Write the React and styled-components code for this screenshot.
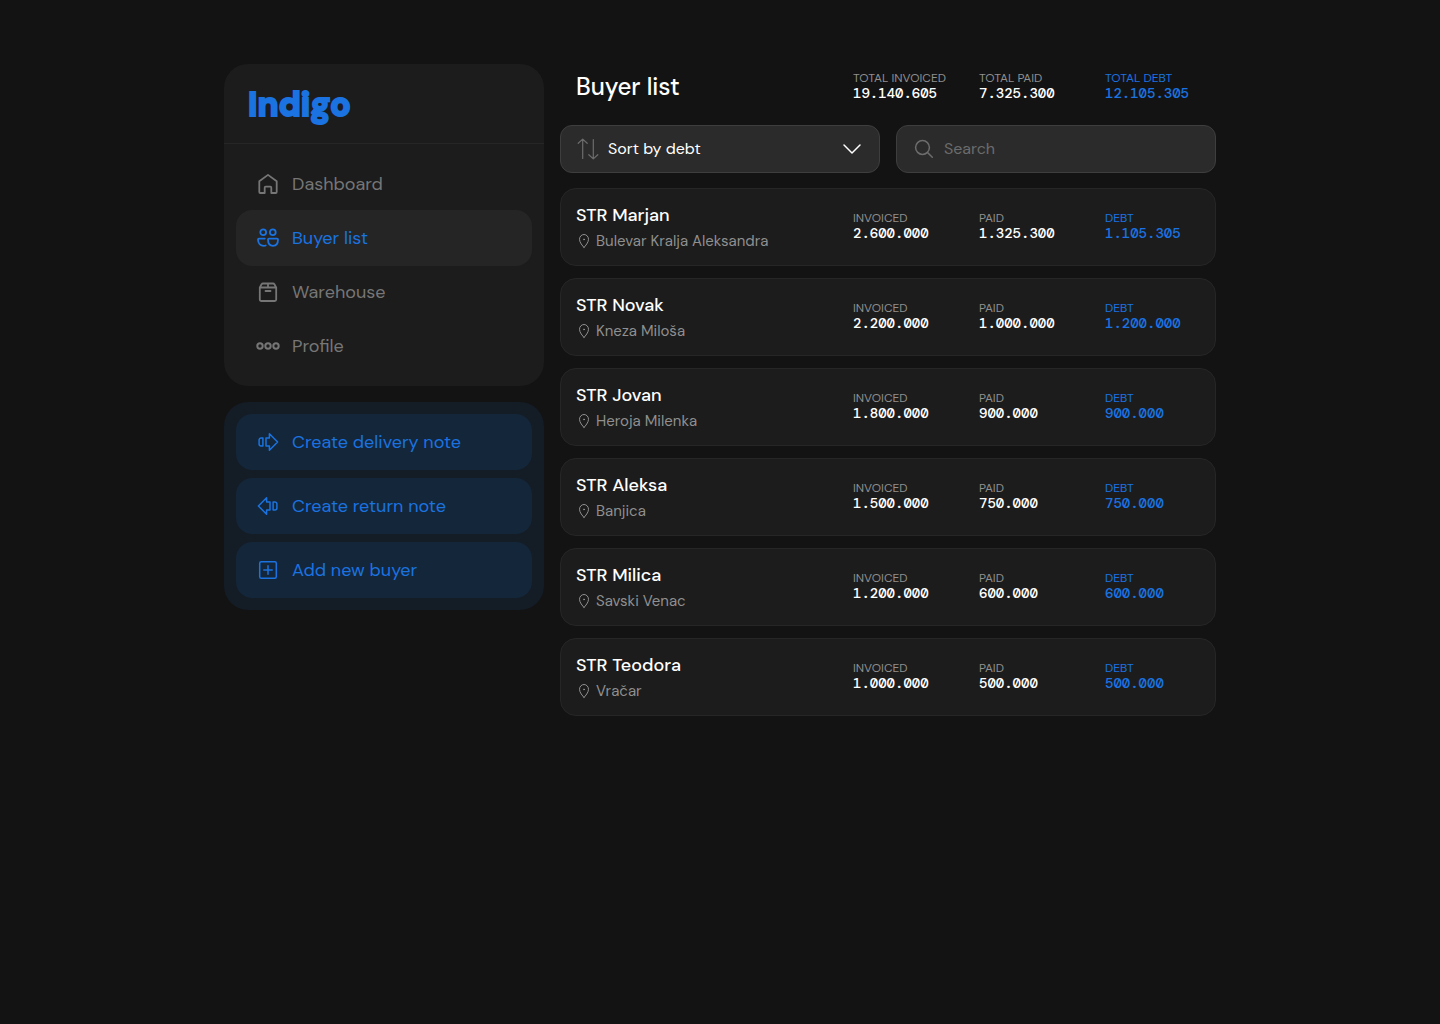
import React, { useState } from "react";
import styled, { createGlobalStyle } from "styled-components";

const GlobalStyle = createGlobalStyle`
    *, *::before, *::after {
        box-sizing: border-box;
    }

    body {
        margin: 0;
        background-color: #131313;
        color: white;
        font-family: "DM Sans", Inter, "Liberation Sans", sans-serif;
    }

    button, input, select {
        font-family: inherit;
    }
`;

const Page = styled.div`
    display: grid;
    grid-template-columns: minmax(240px, 320px) minmax(0, 1fr);
    align-items: start;
    gap: 16px;
    max-width: 1024px;
    margin: 0 auto;
    padding: 64px 16px;
`;

const Sidebar = styled.aside`
    display: flex;
    flex-direction: column;
    gap: 16px;
`;

const Panel = styled.div`
    border-radius: 24px;
    background-color: #1c1c1c;
`;

const Logo = styled.div`
    display: flex;
    align-items: center;
    height: 80px;
    padding: 2px 24px 0;
    border-bottom: 1px solid #262626;
    color: #1a73e0;
    font-size: 34px;
    font-weight: 800;
    -webkit-text-stroke: 2px #1a73e0;
`;

const Nav = styled.nav`
    display: flex;
    flex-direction: column;
    padding: 12px;
`;

const NavLink = styled.a`
    display: flex;
    align-items: center;
    gap: 12px;
    height: 56px;
    padding: 0 20px;
    border-radius: 16px;
    background-color: ${({ $active }) => ($active ? "#252525" : "transparent")};
    color: ${({ $active }) => ($active ? "#1a73e0" : "#767676")};
    font-size: 18px;
    text-decoration: none;

    & + & {
        margin-top: -2px;
    }
`;

const Actions = styled.div`
    display: flex;
    flex-direction: column;
    gap: 8px;
    padding: 12px;
    border-radius: 24px;
    background-color: #141c26;
`;

const ActionButton = styled.button`
    display: flex;
    align-items: center;
    gap: 12px;
    height: 56px;
    padding: 0 20px;
    border: none;
    border-radius: 16px;
    background-color: #142639;
    color: #1a73e0;
    font-size: 18px;
    cursor: pointer;
`;

const Row = styled.div`
    display: grid;
    grid-template-columns: minmax(0, 1fr) 110px 110px 95px;
    align-items: center;
    column-gap: 16px;
`;

const Header = styled(Row)`
    height: 45px;
    margin-bottom: 16px;
    padding: 0 16px;
`;

const Title = styled.h1`
    margin: 0;
    font-size: 24px;
    font-weight: 500;
`;

const Controls = styled.div`
    display: grid;
    grid-template-columns: 1fr 1fr;
    gap: 16px;
    margin-bottom: 15px;
`;

const Field = styled.label`
    display: flex;
    align-items: center;
    gap: 8px;
    height: 48px;
    padding: 0 15px;
    border: 1px solid #3e3e3e;
    border-radius: 12px;
    background-color: #2b2b2b;
    color: #6c6c6c;
`;

const Select = styled.select`
    flex: 1;
    min-width: 0;
    padding: 0 0 2px;
    border: none;
    outline: none;
    appearance: none;
    background-color: transparent;
    color: white;
    font-size: 16px;
`;

const Input = styled.input`
    flex: 1;
    min-width: 0;
    padding: 0 0 2px;
    border: none;
    outline: none;
    background-color: transparent;
    color: white;
    font-size: 16px;

    &::placeholder {
        color: #6c6c6c;
    }
`;

const BuyerList = styled.ul`
    display: flex;
    flex-direction: column;
    gap: 12px;
    margin: 0;
    padding: 0;
    list-style: none;
`;

const BuyerRow = styled(Row)`
    height: 78px;
    padding: 0 15px;
    border: 1px solid #262626;
    border-radius: 16px;
    background-color: #1c1c1c;
`;

const BuyerInfo = styled.div`
    padding-top: 2px;
    line-height: 26px;
`;

const BuyerName = styled.h2`
    margin: 0;
    font-size: 18px;
    font-weight: 500;
`;

const Address = styled.div`
    display: flex;
    align-items: center;
    gap: 4px;
    color: #8f8f8f;
    font-size: 15px;
`;

const StatBox = styled.div`
    padding-bottom: 4px;
    color: ${({ $debt }) => ($debt ? "#1a73e0" : "white")};
    white-space: nowrap;
`;

const StatLabel = styled.div`
    color: ${({ $debt }) => ($debt ? "#1a73e0" : "#8f8f8f")};
    font-size: 12px;
    line-height: 16px;
`;

const StatValue = styled.div`
    font-family: "DM Mono", "DejaVu Sans Mono", monospace;
    font-size: 14px;
    font-weight: 500;
    line-height: 14px;
`;

const Svg = styled.svg`
    flex: none;
    fill: none;
    stroke: ${({ $color }) => $color || "currentColor"};
    stroke-linecap: round;
    stroke-linejoin: round;
`;

function Icon({ size = 24, width = 2, color, children }) {
    return (
        <Svg width={size} height={size} viewBox={`0 0 ${size} ${size}`} strokeWidth={width} $color={color} aria-hidden="true">
            {children}
        </Svg>
    )
}

const HomeIcon = () => (
    <Icon width={1.8}>
        <path d="M3.3 9.3 12 2.9l8.7 6.4V20a1 1 0 0 1-1 1h-4.4v-5.4a1 1 0 0 0-1-1H9.7a1 1 0 0 0-1 1V21H4.3a1 1 0 0 1-1-1z" />
    </Icon>
)

const UsersIcon = () => (
    <Icon width={1.8}>
        <circle cx="7.2" cy="6.3" r="2.9" />
        <circle cx="16.8" cy="6.3" r="2.9" />
        <path d="M8.8 12.6H3a1 1 0 0 0-1 1c0 3.8 2.4 6.3 5.8 6.3.7 0 1.3-.1 1.9-.4" />
        <path d="M13 12.6h8a1 1 0 0 1 1 1c0 3.8-2 6.3-5 6.3s-5-2.5-5-6.3a1 1 0 0 1 1-1z" />
    </Icon>
)

const BoxIcon = () => (
    <Icon width={1.8}>
        <path d="M3.8 7.5 5.6 4.3a1.5 1.5 0 0 1 1.3-.8h10.2a1.5 1.5 0 0 1 1.3.8l1.8 3.2v12a1.5 1.5 0 0 1-1.5 1.5H5.3a1.5 1.5 0 0 1-1.5-1.5zM3.8 7.5h16.4M12 3.5v4M9.5 11h5" />
    </Icon>
)

const DotsIcon = () => (
    <Icon>
        <circle cx="4" cy="12" r="2.7" />
        <circle cx="12" cy="12" r="2.7" />
        <circle cx="20" cy="12" r="2.7" />
    </Icon>
)

const DeliveryIcon = () => (
    <Icon width={1.5}>
        <path d="M6.9 7.9H5.1a2 2 0 0 0-2 2v4.2a2 2 0 0 0 2 2h1.8zM10 7.9h3.4V3.8l8.2 8.2-8.2 8.2v-4.1H10z" />
    </Icon>
)

const ReturnIcon = () => (
    <Icon width={1.5}>
        <path d="M17.1 7.9h1.8a2 2 0 0 1 2 2v4.2a2 2 0 0 1-2 2h-1.8zM14 7.9h-3.4V3.8L2.4 12l8.2 8.2v-4.1H14z" />
    </Icon>
)

const PlusIcon = () => (
    <Icon width={1.5}>
        <rect x="3.7" y="3.7" width="16.6" height="16.6" rx="1.5" />
        <path d="M12 7.8v8.4M7.8 12h8.4" />
    </Icon>
)

const SortIcon = () => (
    <Icon width={1.2}>
        <path d="M6.7 21.5V2.3M2.2 6.3l4.5-4.2 4.5 4.2M17.3 2.5v19.2M12.8 17.7l4.5 4.2 4.5-4.2" />
    </Icon>
)

const ChevronIcon = () => (
    <Icon width={1.5} color="white">
        <path d="m4 8 8 8 8-8" />
    </Icon>
)

const SearchIcon = () => (
    <Icon width={1.5}>
        <circle cx="10.5" cy="10.5" r="6.9" />
        <path d="m15.5 15.5 4.8 4.8" />
    </Icon>
)

const PinIcon = () => (
    <Icon size={16} width={1}>
        <path d="M8 14.4c-1.5-1.6-4.5-4.9-4.5-8.1a4.5 4.8 0 0 1 9 0c0 3.2-3 6.5-4.5 8.1z" />
        <circle cx="8" cy="6.4" r=".5" />
    </Icon>
)

const navItems = [
    { label: "Dashboard", icon: HomeIcon },
    { label: "Buyer list", icon: UsersIcon },
    { label: "Warehouse", icon: BoxIcon },
    { label: "Profile", icon: DotsIcon },
];

const actions = [
    { label: "Create delivery note", icon: DeliveryIcon },
    { label: "Create return note", icon: ReturnIcon },
    { label: "Add new buyer", icon: PlusIcon },
];

const buyers = [
    { name: "STR Marjan", address: "Bulevar Kralja Aleksandra", invoiced: "2.600.000", paid: "1.325.300", debt: "1.105.305" },
    { name: "STR Novak", address: "Kneza Miloša", invoiced: "2.200.000", paid: "1.000.000", debt: "1.200.000" },
    { name: "STR Jovan", address: "Heroja Milenka", invoiced: "1.800.000", paid: "900.000", debt: "900.000" },
    { name: "STR Aleksa", address: "Banjica", invoiced: "1.500.000", paid: "750.000", debt: "750.000" },
    { name: "STR Milica", address: "Savski Venac", invoiced: "1.200.000", paid: "600.000", debt: "600.000" },
    { name: "STR Teodora", address: "Vračar", invoiced: "1.000.000", paid: "500.000", debt: "500.000" },
];

function Stat({ label, value, debt }) {
    return (
        <StatBox $debt={debt}>
            <StatLabel $debt={debt}>{label}</StatLabel>
            <StatValue>{value}</StatValue>
        </StatBox>
    )
}

function Buyer({ buyer }) {
    return (
        <BuyerRow as="li">
            <BuyerInfo>
                <BuyerName>{buyer.name}</BuyerName>
                <Address><PinIcon />{buyer.address}</Address>
            </BuyerInfo>
            <Stat label="INVOICED" value={buyer.invoiced} />
            <Stat label="PAID" value={buyer.paid} />
            <Stat label="DEBT" value={buyer.debt} debt />
        </BuyerRow>
    )
}

export default function App() {
    const [search, setSearch] = useState("");

    const visible = buyers.filter((buyer) => buyer.name.toLowerCase().includes(search.toLowerCase()));

    return (
        <>
            <GlobalStyle />
            <Page>
                <Sidebar>
                    <Panel>
                        <Logo>Indigo</Logo>
                        <Nav>
                            {navItems.map(({ label, icon: NavIcon }) => (
                                <NavLink key={label} href="#" $active={label === "Buyer list"}><NavIcon />{label}</NavLink>
                            ))}
                        </Nav>
                    </Panel>
                    <Actions>
                        {actions.map(({ label, icon: ActionIcon }) => (
                            <ActionButton key={label} type="button"><ActionIcon />{label}</ActionButton>
                        ))}
                    </Actions>
                </Sidebar>
                <main>
                    <Header as="header">
                        <Title>Buyer list</Title>
                        <Stat label="TOTAL INVOICED" value="19.140.605" />
                        <Stat label="TOTAL PAID" value="7.325.300" />
                        <Stat label="TOTAL DEBT" value="12.105.305" debt />
                    </Header>
                    <Controls>
                        <Field>
                            <SortIcon />
                            <Select aria-label="Sort buyers">
                                <option>Sort by debt</option>
                            </Select>
                            <ChevronIcon />
                        </Field>
                        <Field>
                            <SearchIcon />
                            <Input aria-label="Search" placeholder="Search" value={search} onChange={(e) => setSearch(e.target.value)} />
                        </Field>
                    </Controls>
                    <BuyerList>
                        {visible.map((buyer) => <Buyer key={buyer.name} buyer={buyer} />)}
                    </BuyerList>
                </main>
            </Page>
        </>
    )
}
